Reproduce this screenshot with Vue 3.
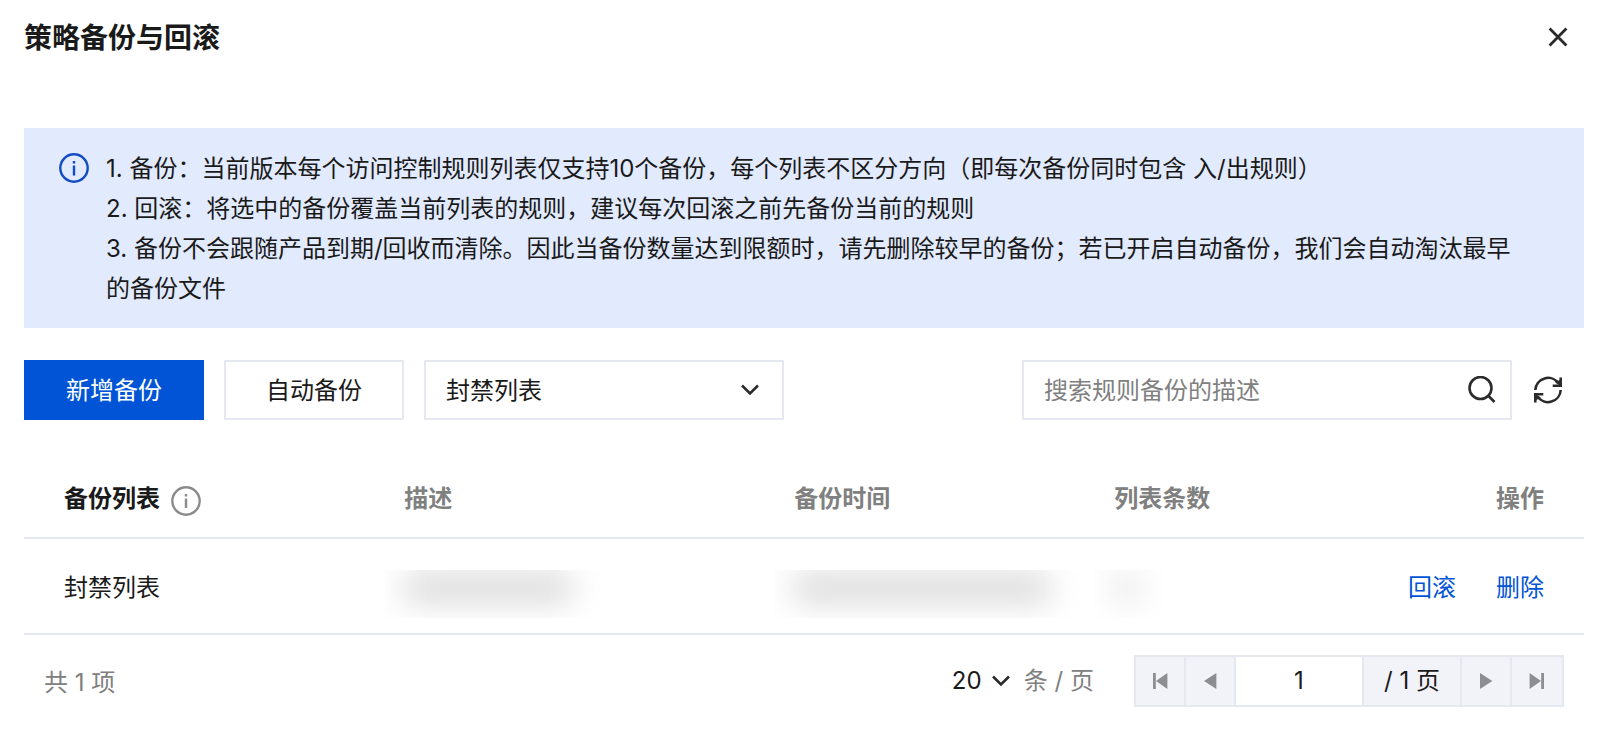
<template>
  <div class="backup-dialog">
    <header class="dialog-header">
      <h2 class="dialog-title">策略备份与回滚</h2>
      <button class="icon-btn" type="button" aria-label="关闭">
        <svg width="28" height="28" viewBox="0 0 28 28" fill="none" stroke="#2b2b2b" stroke-width="2.8">
          <path d="M5.6 5.6l16.8 16.8M22.4 5.6L5.6 22.4" />
        </svg>
      </button>
    </header>

    <section class="notice">
      <svg class="notice-icon" width="30" height="30" viewBox="0 0 30 30" fill="none">
        <circle cx="15" cy="15" r="13.7" stroke="#134bc4" stroke-width="2.4" />
        <path d="M15 12.5v10M15 8v2.6" stroke="#134bc4" stroke-width="2.4" />
      </svg>
      <div class="notice-body">
        <p v-for="tip in tips" :key="tip">{{ tip }}</p>
      </div>
    </section>

    <div class="toolbar">
      <button class="btn btn-primary" type="button">新增备份</button>
      <button class="btn" type="button">自动备份</button>
      <div class="select-box">
        <select v-model="listType" aria-label="列表类型">
          <option>封禁列表</option>
          <option>放通列表</option>
        </select>
        <svg class="chevron" width="18" height="12" viewBox="0 0 18 12" fill="none" stroke="#2b2b2b" stroke-width="2.6">
          <path d="M1 1.5l8 8 8-8" />
        </svg>
      </div>
      <div class="search-box">
        <input v-model="keyword" type="text" placeholder="搜索规则备份的描述" aria-label="搜索规则备份的描述" />
        <button class="icon-btn" type="button" aria-label="搜索">
          <svg width="28" height="28" viewBox="0 0 28 28" fill="none" stroke="#2b2b2b" stroke-width="2.6">
            <circle cx="12.5" cy="12" r="11" />
            <path d="M20 19.5l6.5 6.5" />
          </svg>
        </button>
      </div>
      <button class="icon-btn refresh-btn" type="button" aria-label="刷新">
        <svg width="28" height="28" viewBox="0 0 28 28" fill="none" stroke="#2b2b2b" stroke-width="2.6">
          <path d="M1.3 14A12.7 12.7 0 0 1 24.5 7.5" />
          <path d="M26.7 14A12.7 12.7 0 0 1 3.5 20.5" />
          <path d="M26.7 1.5v8.2h-8M1.3 26.5v-8.2h8" />
          <path d="M21 6l5 4V4zM7 22l-5-4v6z" fill="#2b2b2b" stroke="none" />
        </svg>
      </button>
    </div>

    <table class="backup-table">
      <thead>
        <tr>
          <th class="col-name">
            <span class="name-head">
              备份列表
              <svg width="30" height="30" viewBox="0 0 30 30" fill="none">
                <circle cx="15" cy="15" r="13.7" stroke="#8b8b8b" stroke-width="2.4" />
                <path d="M15 12.5v9.5M15 8v2.4" stroke="#8b8b8b" stroke-width="2.4" />
              </svg>
            </span>
          </th>
          <th class="col-desc">描述</th>
          <th class="col-time">备份时间</th>
          <th class="col-count">列表条数</th>
          <th class="col-action">操作</th>
        </tr>
      </thead>
      <tbody>
        <tr v-for="row in rows" :key="row.name">
          <td class="col-name">{{ row.name }}</td>
          <td v-for="mask in row.masks" :key="mask" class="masked-cell">
            <div class="mask"><div class="smudge" :class="mask"></div></div>
          </td>
          <td class="col-action">
            <a href="#">回滚</a>
            <a href="#">删除</a>
          </td>
        </tr>
      </tbody>
    </table>

    <footer class="pagination">
      <span class="total">共 {{ rows.length }} 项</span>
      <div class="page-size">
        <select v-model="pageSize" aria-label="每页条数">
          <option>10</option>
          <option>20</option>
          <option>50</option>
        </select>
        <svg class="chevron" width="18" height="12" viewBox="0 0 18 12" fill="none" stroke="#2b2b2b" stroke-width="2.6">
          <path d="M1 1.5l8 8 8-8" />
        </svg>
      </div>
      <span class="unit">条 / 页</span>
      <div class="pager">
        <button type="button" aria-label="第一页" disabled>
          <svg width="16" height="16" viewBox="0 0 16 16" fill="#8d8e92">
            <path d="M1 0h2.8v16H1zM15.4 0v16L4 8z" />
          </svg>
        </button>
        <button type="button" aria-label="上一页" disabled>
          <svg width="16" height="16" viewBox="0 0 16 16" fill="#8d8e92">
            <path d="M14.4 0v16L2 8z" />
          </svg>
        </button>
        <input v-model="page" type="text" aria-label="页码" />
        <span class="page-count">/ 1 页</span>
        <button type="button" aria-label="下一页" disabled>
          <svg width="16" height="16" viewBox="0 0 16 16" fill="#8d8e92">
            <path d="M2 0v16l12.4-8z" />
          </svg>
        </button>
        <button type="button" aria-label="最后一页" disabled>
          <svg width="16" height="16" viewBox="0 0 16 16" fill="#8d8e92">
            <path d="M12.2 0H15v16h-2.8zM.6 0v16L12 8z" />
          </svg>
        </button>
      </div>
    </footer>
  </div>
</template>

<script setup>
import { ref } from 'vue'

const tips = [
  '1. 备份：当前版本每个访问控制规则列表仅支持10个备份，每个列表不区分方向（即每次备份同时包含 入/出规则）',
  '2. 回滚：将选中的备份覆盖当前列表的规则，建议每次回滚之前先备份当前的规则',
  '3. 备份不会跟随产品到期/回收而清除。因此当备份数量达到限额时，请先删除较早的备份；若已开启自动备份，我们会自动淘汰最早的备份文件'
]

const rows = [{ name: '封禁列表', masks: ['desc', 'time', 'count'] }]

const listType = ref('封禁列表')
const keyword = ref('')
const pageSize = ref('20')
const page = ref('1')
</script>

<style>
body {
  margin: 0;
  background: #fff;
}
</style>

<style scoped>
.backup-dialog {
  padding: 16px 40px 34px 24px;
  font-family: Inter, "Noto Sans CJK SC", sans-serif;
  font-size: 24px;
  line-height: 40px;
  color: #1a1a1a;
}

button,
input,
select {
  box-sizing: border-box;
  margin: 0;
  font: inherit;
  color: inherit;
  border-radius: 0;
  outline: none;
}

svg {
  display: block;
  flex: none;
}

.dialog-header {
  display: flex;
  align-items: center;
  justify-content: space-between;
  padding-right: 12px;
  margin-bottom: 70px;
}

.dialog-title {
  margin: 0;
  padding-top: 2px;
  font-size: 28px;
  font-weight: 700;
}

.icon-btn {
  padding: 0;
  border: 0;
  background: none;
  cursor: pointer;
}

.notice {
  display: flex;
  gap: 17px;
  padding: 21px 60px 19px 35px;
  background: #e2eafe;
}

.notice-icon {
  margin-top: 4px;
}

.notice-body p {
  margin: 0;
}

.toolbar {
  display: flex;
  align-items: center;
  gap: 20px;
  margin-top: 32px;
  padding-right: 22px;
}

.btn {
  width: 180px;
  height: 60px;
  padding: 2px 0 0;
  border: 2px solid #e5e8f0;
  background: #fff;
  cursor: pointer;
}

.btn-primary {
  border-color: #0054d5;
  background: #0054d5;
  color: #fff;
}

.select-box {
  position: relative;
  width: 360px;
}

select {
  appearance: none;
  background: transparent;
}

.select-box select {
  display: block;
  width: 100%;
  height: 60px;
  padding: 2px 60px 0 20px;
  border: 2px solid #e5e8f0;
}

.select-box .chevron {
  position: absolute;
  top: 24px;
  right: 25px;
  pointer-events: none;
}

.search-box {
  display: flex;
  align-items: center;
  box-sizing: border-box;
  width: 490px;
  height: 60px;
  margin-left: auto;
  padding: 0 14px 0 20px;
  border: 2px solid #e5e8f0;
}

.search-box input {
  flex: 1;
  min-width: 0;
  padding: 2px 0 0;
  border: 0;
  background: none;
}

.search-box input::placeholder {
  color: #808080;
  opacity: 1;
}

.refresh-btn {
  margin-left: 2px;
}

.backup-table {
  width: 100%;
  margin-top: 38px;
  border-collapse: separate;
  border-spacing: 0;
  table-layout: fixed;
}

.backup-table th,
.backup-table td {
  box-sizing: border-box;
  padding: 21px 20px 18px;
  border-bottom: 2px solid #e5e8ee;
  text-align: left;
}

.backup-table th {
  font-weight: 600;
  color: #808080;
}

.backup-table td {
  height: 96px;
}

.backup-table .col-name {
  width: 23.1%;
  padding-left: 40px;
  color: #1a1a1a;
}

.col-desc {
  width: 25%;
}

.col-time {
  width: 20.5%;
}

.name-head {
  display: flex;
  align-items: center;
  gap: 11px;
}

.name-head svg {
  margin-top: 3px;
}

.backup-table .col-action {
  padding-right: 40px;
  text-align: right;
}

.col-action a {
  margin-left: 40px;
  color: #0054d5;
  text-decoration: none;
}

.backup-table .masked-cell {
  padding: 31px 20px 15px;
}

/* sensitive values are hidden behind a soft smudge */
.mask {
  height: 48px;
  padding-top: 4px;
  box-sizing: border-box;
  clip-path: inset(0 -50px 0 -20px);
}

.smudge {
  height: 28px;
  background: #d7d7d7;
  filter: blur(16px);
}

.smudge.desc {
  width: 168px;
}

.smudge.time {
  width: 256px;
}

.smudge.count {
  width: 24px;
  background: #e2e2e2;
}

.pagination {
  display: flex;
  align-items: center;
  margin-top: 20px;
  padding: 0 20px;
}

.total {
  padding-top: 4px;
  color: #808080;
}

.page-size {
  display: flex;
  align-items: center;
  position: relative;
  margin-left: auto;
}

.page-size select {
  width: 58px;
  height: 40px;
  padding: 0;
  border: 0;
}

.page-size .chevron {
  position: absolute;
  right: 0;
  pointer-events: none;
}

.unit {
  margin: 0 40px 0 14px;
  color: #808080;
}

.pager {
  display: flex;
  box-sizing: border-box;
  height: 52px;
  border: 2px solid #e5e8f0;
  background: #f2f3f8;
}

.pager button {
  display: flex;
  align-items: center;
  justify-content: center;
  width: 50px;
  padding: 0;
  border: 0;
  border-right: 2px solid #e5e8f0;
  background: none;
}

.pager button:last-child {
  border-right: 0;
}

.pager input {
  width: 128px;
  padding: 0;
  border: 0;
  border-right: 2px solid #e5e8f0;
  background: #fff;
  text-align: center;
}

.page-count {
  width: 96px;
  line-height: 48px;
  border-right: 2px solid #e5e8f0;
  text-align: center;
}
</style>
